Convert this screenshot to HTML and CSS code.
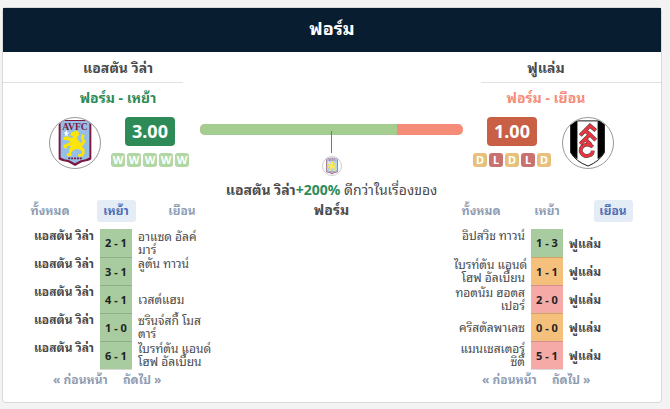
FILE: index.html
```html
<!DOCTYPE html>
<html lang="th">

<head>
    <meta charset="UTF-8">
    <meta name="viewport" content="width=device-width, initial-scale=1.0">
    <title>ฟอร์ม</title>
    <link rel="stylesheet" href="styles.css">
</head>

<body>
    <svg class="defs">
        <symbol id="villa" viewBox="0 0 52 52">
            <path d="M9 2H43V43Q40 45 33 46L26 50L19 46Q12 45 9 43Z" fill="#7b1740" />
            <path d="M11 3H41V41Q38 43 32 44L26 47L20 44Q14 43 11 41Z" fill="#95bfe5" />
            <text x="26" y="12" class="crest-text">AVFC</text>
            <path d="M22 15L25 14L28 13L30 15L30 18L28 20L29 23L32 26L34 24L32 21L33 17L36 18L35 21L37 24L35 28L33 29L36 33L36 37L34 40L29 40L29 38L33 37L33 34L29 32L25 33L22 36L23 39L18 40L17 38L20 36L20 32L22 29L18 29L17 32L14 31L14 28L19 26L22 25L18 23L14 23L14 20L18 19L23 21L24 19L21 18Z" fill="#fee505" />
            <path d="M17 12L18 15H20L18 17L19 19L17 18L15 19L16 17L14 15H16Z" fill="#fff" />
            <path d="M19 42H33" stroke="#7b1740" stroke-width="2" stroke-dasharray="2 1" />
        </symbol>
        <symbol id="fulham" viewBox="0 0 52 52">
            <path d="M8 3H43V36Q38 45 26 50Q13 45 8 36Z" fill="#fff" stroke="#111" />
            <path d="M8 3H15V43Q10 40 8 36ZM43 3H36V43Q41 40 43 36Z" fill="#000" />
            <g fill="none" stroke="#444" stroke-width="4">
                <path d="M18 18L28 8L34 13M23 13L30 19M18 27L28 17L34 23M23 22L29 28M31 30Q26 26 21 29Q17 32 19 36Q22 41 27 39Q31 38 31 34" />
            </g>
            <g fill="none" stroke="#e83540" stroke-width="3">
                <path d="M18 18L28 8L34 13M23 13L30 19M18 27L28 17L34 23M23 22L29 28M31 30Q26 26 21 29Q17 32 19 36Q22 41 27 39Q31 38 31 34" />
            </g>
        </symbol>
    </svg>

    <div class="card">
        <h1>ฟอร์ม</h1>
        <div class="compare">
            <section class="team home">
                <h2>แอสตัน วิล่า</h2>
                <h3>ฟอร์ม - เหย้า</h3>
                <div class="team-form">
                    <svg class="crest"><use href="#villa" /></svg>
                    <div class="rating">
                        <div class="points good">3.00</div>
                        <div class="results">
                            <span class="w">W</span><span class="w">W</span><span class="w">W</span><span class="w">W</span><span class="w">W</span>
                        </div>
                    </div>
                </div>
            </section>

            <section class="summary">
                <div class="bar"><div class="bar-home"></div></div>
                <div class="pointer"></div>
                <svg class="crest small"><use href="#villa" /></svg>
                <p><b>แอสตัน วิล่า</b><b class="percent">+200%</b> ดีกว่าในเรื่องของ<br><b>ฟอร์ม</b></p>
            </section>

            <section class="team away">
                <h2>ฟูแล่ม</h2>
                <h3>ฟอร์ม - เยือน</h3>
                <div class="team-form">
                    <div class="rating">
                        <div class="points bad">1.00</div>
                        <div class="results">
                            <span class="d">D</span><span class="l">L</span><span class="d">D</span><span class="l">L</span><span class="d">D</span>
                        </div>
                    </div>
                    <svg class="crest"><use href="#fulham" /></svg>
                </div>
            </section>

            <section class="matches home-list">
                <div class="tabs">
                    <button>ทั้งหมด</button>
                    <button class="active">เหย้า</button>
                    <button>เยือน</button>
                </div>
                <table>
                    <tr><td class="top"><b>แอสตัน วิล่า</b></td><td class="score win">2 - 1</td><td>อาแซด อัลค์<br>มาร์</td></tr>
                    <tr><td class="top"><b>แอสตัน วิล่า</b></td><td class="score win">3 - 1</td><td class="top">ลูตัน ทาวน์</td></tr>
                    <tr><td class="top"><b>แอสตัน วิล่า</b></td><td class="score win">4 - 1</td><td>เวสต์แฮม</td></tr>
                    <tr><td class="top"><b>แอสตัน วิล่า</b></td><td class="score win">1 - 0</td><td>ซรินจ์สกี้ โมส<br>ตาร์</td></tr>
                    <tr><td class="top"><b>แอสตัน วิล่า</b></td><td class="score win">6 - 1</td><td>ไบรท์ตัน แอนด์<br>โฮฟ อัลเบี้ยน</td></tr>
                </table>
                <div class="pager"><a href="#">« ก่อนหน้า</a><a href="#">ถัดไป »</a></div>
            </section>

            <section class="matches away-list">
                <div class="tabs">
                    <button>ทั้งหมด</button>
                    <button>เหย้า</button>
                    <button class="active">เยือน</button>
                </div>
                <table>
                    <tr><td class="top">อิปสวิช ทาวน์</td><td class="score win">1 - 3</td><td><b>ฟูแล่ม</b></td></tr>
                    <tr><td>ไบรท์ตัน แอนด์<br>โฮฟ อัลเบี้ยน</td><td class="score draw">1 - 1</td><td><b>ฟูแล่ม</b></td></tr>
                    <tr><td>ทอตนัม ฮอตส<br>เปอร์</td><td class="score loss">2 - 0</td><td><b>ฟูแล่ม</b></td></tr>
                    <tr><td>คริสตัลพาเลซ</td><td class="score draw">0 - 0</td><td><b>ฟูแล่ม</b></td></tr>
                    <tr><td>แมนเชสเตอร์<br>ซิตี้</td><td class="score loss">5 - 1</td><td><b>ฟูแล่ม</b></td></tr>
                </table>
                <div class="pager"><a href="#">« ก่อนหน้า</a><a href="#">ถัดไป »</a></div>
            </section>
        </div>
    </div>
</body>

</html>
```
FILE: styles.css
```css
* {
    box-sizing: border-box;
}

body {
    margin: 7px 8px 6px 2px;
    background: #f3f3f3;
    color: #4a4a4a;
    font-family: "Noto Sans", "Noto Sans Thai Looped", Loma, Waree, Garuda, "Noto Sans Thai", Tahoma, sans-serif;
    font-size: 12px;
}

.defs {
    display: none;
}

.card {
    background: #fff;
    border: 1px solid #d8d8d8;
    border-radius: 4px;
}

h1,
h2,
h3,
p {
    margin: 0;
    text-align: center;
}

h1 {
    height: 44px;
    background: #081e30;
    color: #fff;
    font-size: 18px;
    line-height: 40px;
}

.compare {
    display: grid;
    grid-template-columns: 180px 35px 1fr 35px 180px;
    grid-template-rows: 148px auto;
}

.team {
    grid-row: 1;
}

.home {
    grid-column: 1;
}

.away {
    grid-column: 5;
}

h2 {
    border-bottom: 1px solid #e0e0e0;
    font-size: 14px;
    line-height: 32px;
    height: 31px;
}

.home h2,
.home h3 {
    padding-left: 50px;
}

.away h2,
.away h3 {
    padding-right: 50px;
}

h3 {
    color: #2e8b57;
    font-size: 14px;
    line-height: 30px;
}

.away h3 {
    color: #f58c78;
}

.team-form {
    display: flex;
    gap: 10px;
    margin-top: 4px;
}

.home .team-form {
    padding-left: 46px;
}

.away .team-form {
    justify-content: flex-end;
    padding-right: 47px;
    gap: 11px;
}

.crest {
    width: 52px;
    height: 52px;
    border: 1px solid #999;
    border-radius: 50%;
    flex-shrink: 0;
}

.crest-text {
    font: bold 10px "Liberation Serif", serif;
    fill: #7b1740;
    text-anchor: middle;
}

.rating {
    display: flex;
    flex-direction: column;
    align-items: center;
    gap: 7px;
}

.points {
    width: 50px;
    border-radius: 4px;
    color: #fff;
    font-size: 18px;
    font-weight: bold;
    line-height: 29px;
    text-align: center;
}

.good {
    background: #2e8b57;
}

.bad {
    background: #c95f45;
}

.results {
    display: flex;
    gap: 2px;
}

.results span {
    width: 14px;
    border-radius: 3px;
    color: #fff;
    font-size: 11px;
    font-weight: bold;
    line-height: 14px;
    text-align: center;
}

.w {
    background: #b1d8a4;
}

.d {
    background: #e8c07b;
}

.l {
    background: #c97171;
}

.summary {
    grid-column: 2 / 5;
    grid-row: 1 / 3;
    display: flex;
    flex-direction: column;
    align-items: center;
    padding: 72px 18px 0 17px;
}

.bar {
    width: 100%;
    height: 11px;
    border-radius: 5px;
    background: #f58c78;
    overflow: hidden;
}

.bar-home {
    width: 75%;
    height: 100%;
    background: #a3cd91;
}

.pointer {
    width: 1px;
    height: 22px;
    margin-top: -4px;
    background: #777;
}

.small {
    width: 20px;
    height: 20px;
    margin: 3px 0 4px;
    border-color: #bbb;
    opacity: 0.7;
}

.summary p {
    font-size: 14px;
    line-height: 20px;
    white-space: nowrap;
}

.percent {
    color: #2e8b57;
}

.matches {
    grid-row: 2;
    z-index: 1;
}

.home-list {
    grid-column: 1 / 3;
    padding-left: 14px;
}

.away-list {
    grid-column: 4 / 6;
    padding-right: 14px;
}

.tabs {
    display: grid;
    grid-template-columns: repeat(3, 66px);
    justify-items: center;
    margin-bottom: 7px;
}

.away-list .tabs,
.away-list table {
    margin-left: 2px;
}

.tabs button {
    width: 39px;
    height: 22px;
    padding: 0 0 3px;
    border: none;
    border-radius: 3px;
    background: none;
    color: #8f9db3;
    font-family: inherit;
    font-size: 12px;
    font-weight: bold;
    white-space: nowrap;
}

.tabs .active {
    background: #e4ecf6;
    color: #4a6fb5;
}

table {
    width: 100%;
    border-collapse: collapse;
    table-layout: fixed;
}

td {
    height: 28px;
    padding: 0 6px;
    line-height: 13px;
    white-space: nowrap;
}

td:first-child {
    width: 83px;
    text-align: right;
}

.top {
    vertical-align: top;
}

.matches .score {
    width: 32px;
    padding: 0;
    border-bottom: 1px solid rgba(0, 0, 0, 0.15);
    color: #222;
    font-size: 11px;
    font-weight: bold;
    text-align: center;
}

.win {
    background: #a8cc9f;
}

.draw {
    background: #f5c07c;
}

.loss {
    background: #f5aaa8;
}

.pager {
    display: flex;
    gap: 15px;
    padding: 1px 0 14px 36px;
    font-size: 12px;
    line-height: 17px;
}

.pager a {
    color: #8f9db3;
    font-weight: bold;
    text-decoration: none;
}
```
